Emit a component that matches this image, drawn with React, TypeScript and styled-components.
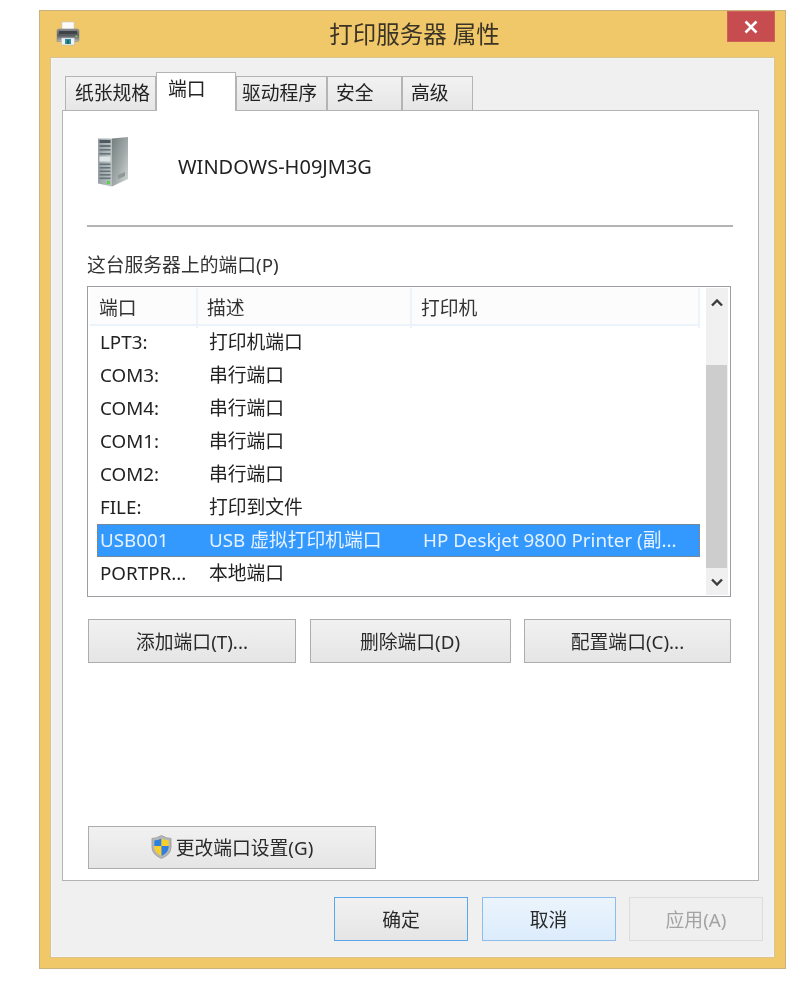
import React from 'react';
import styled, { createGlobalStyle } from 'styled-components';

const GlobalStyle = createGlobalStyle`
  html, body {
    margin: 0;
    padding: 0;
    background: #ffffff;
  }
  body {
    font-family: "Noto Sans", "Noto Sans CJK SC", sans-serif;
    font-size: 18.8px;
    color: #222222;
  }
`;

const Page = styled.div`
  width: 810px;
  height: 998px;
  box-sizing: border-box;
  padding: 10px 0 0 39px;
  overflow: hidden;
`;

const Window = styled.div`
  width: 747px;
  height: 959px;
  box-sizing: border-box;
  display: flex;
  flex-direction: column;
  background: #f0c869;
  border: 1px solid #c9b27c;
  filter: blur(0.5px);
`;

const TitleBar = styled.div`
  height: 46px;
  flex: none;
  display: grid;
  grid-template-columns: 1fr auto 1fr;
  align-items: center;
  padding: 0 10px 0 14px;
`;

const Title = styled.div`
  font-size: 23.5px;
  color: #3a3326;
  margin-top: -3px;
`;

const CloseButton = styled.div`
  justify-self: end;
  align-self: start;
  width: 48px;
  height: 31px;
  display: flex;
  align-items: center;
  justify-content: center;
  background: #c74c50;
  box-shadow: inset 0 0 0 1px #d0605a;
`;

const Client = styled.div`
  flex: 1;
  margin: 0 10px 10px;
  display: flex;
  flex-direction: column;
  background: #f0f0f0;
  border: 1px solid #d9c48e;
  box-shadow: inset 0 0 0 1px #f4f4f4;
`;

const TabRow = styled.div`
  height: 39px;
  margin: 14px 0 -1px 14px;
  display: flex;
  align-items: flex-end;
  position: relative;
  z-index: 1;
`;

const Tab = styled.div<{ $active?: boolean; $w: number; $pad: number }>`
  width: ${(p) => p.$w}px;
  height: ${(p) => (p.$active ? 39 : 35)}px;
  box-sizing: border-box;
  padding-left: ${(p) => p.$pad}px;
  line-height: 33px;
  border: 1.5px solid #b4b4b4;
  border-bottom: ${(p) => (p.$active ? 'none' : '1.5px solid #b4b4b4')};
  border-left-width: ${(p) => (p.$active ? 1.5 : 1)}px;
  background: ${(p) => (p.$active ? '#ffffff' : 'linear-gradient(#f2f2f2, #e6e6e6)')};
  color: #222222;
  white-space: nowrap;
`;

const Panel = styled.div`
  flex: none;
  height: 771px;
  margin: 0 15px 0 11px;
  box-sizing: border-box;
  padding: 0 25px 11px 24px;
  display: flex;
  flex-direction: column;
  background: #ffffff;
  border: 1.5px solid #b4b4b4;
`;

const ServerRow = styled.div`
  height: 116px;
  flex: none;
  box-sizing: border-box;
  padding: 26px 0 0 10px;
  display: flex;
  align-items: flex-start;
  gap: 49px;
  border-bottom: 2px solid #b4b4b4;
`;

const ServerName = styled.div`
  margin-top: 17px;
  font-size: 20px;
  line-height: 26px;
  color: #222222;
`;

const SectionLabel = styled.div`
  margin-top: 25px;
  line-height: 26px;
  height: 34px;
  color: #333333;
`;

const ListBox = styled.div`
  width: 644px;
  height: 311px;
  flex: none;
  box-sizing: border-box;
  display: grid;
  grid-template-columns: 1fr 24px;
  padding: 1px 2px 1px 2px;
  border: 1.5px solid #9a9ea3;
`;

const ListBody = styled.div`
  min-width: 0;
  display: flex;
  flex-direction: column;
`;

const HeaderRow = styled.div`
  width: 610px;
  height: 38px;
  flex: none;
  box-sizing: border-box;
  display: grid;
  grid-template-columns: 108px 214px 1fr;
  align-items: stretch;
  background: #fcfcfc;
  border-bottom: 2px solid #ecf3fb;
`;

const HeaderCell = styled.div`
  padding-left: 9px;
  line-height: 40px;
  color: #333333;
  border-right: 2px solid #ecf3fb;
`;

const Rows = styled.div`
  margin-left: 7px;
  width: 603px;
`;

const Row = styled.div<{ $selected?: boolean }>`
  height: 33px;
  box-sizing: border-box;
  display: grid;
  grid-template-columns: 109px 214px 1fr;
  align-items: center;
  padding-left: 3px;
  line-height: 31px;
  white-space: nowrap;
  color: ${(p) => (p.$selected ? '#e6f2ff' : '#222222')};
  background: ${(p) => (p.$selected ? '#3399ff' : 'transparent')};
  outline: ${(p) => (p.$selected ? '1px dotted #b07a40' : 'none')};
  outline-offset: -1px;
`;

const ScrollBar = styled.div`
  display: flex;
  flex-direction: column;
  align-items: stretch;
  margin-left: 2px;
  background: #f0f0f0;
`;

const ScrollArrow = styled.div<{ $h: number }>`
  height: ${(p) => p.$h}px;
  flex: none;
  display: flex;
  align-items: center;
  justify-content: center;
`;

const ScrollThumb = styled.div`
  height: 203px;
  flex: none;
  margin: 47px 1px 0 0;
  background: #cdcdcd;
`;

const ActionRow = styled.div`
  margin: 22px 0 0 1px;
  display: grid;
  grid-template-columns: 208px 201px 207px;
  column-gap: 13.5px;
  flex: none;
`;

const Button = styled.div<{ $variant?: 'default' | 'hover' | 'disabled' }>`
  height: 43.5px;
  box-sizing: border-box;
  display: flex;
  align-items: center;
  justify-content: center;
  gap: 4px;
  white-space: nowrap;
  color: ${(p) => (p.$variant === 'disabled' ? '#a3a3a3' : '#2a2a2a')};
  border: 1.5px solid
    ${(p) =>
      p.$variant === 'default'
        ? '#5aa7f0'
        : p.$variant === 'hover'
          ? '#8dbdea'
          : p.$variant === 'disabled'
            ? '#dcdcdc'
            : '#adadad'};
  background: ${(p) =>
    p.$variant === 'hover'
      ? 'linear-gradient(#ebf4fc, #dcecfc)'
      : p.$variant === 'disabled'
        ? '#efefef'
        : 'linear-gradient(#f1f1f1, #e5e5e5)'};
`;

const SettingsButton = styled(Button)`
  width: 288px;
  margin: auto 0 0 1px;
`;

const Footer = styled.div`
  margin-top: 16px;
  padding-right: 11px;
  display: grid;
  grid-template-columns: repeat(3, 134px);
  column-gap: 13.5px;
  justify-content: end;
`;

const PrinterIcon = () => (
  <svg width="28" height="28" viewBox="0 0 28 28">
    <defs>
      <linearGradient id="pr-body" x1="0" y1="0" x2="0" y2="1">
        <stop offset="0" stopColor="#8b8f92" />
        <stop offset="0.5" stopColor="#55595d" />
        <stop offset="1" stopColor="#b9bcbe" />
      </linearGradient>
    </defs>
    <path d="M8 2h12v9H8z" fill="#fbfbfb" stroke="#c9c9c9" strokeWidth="0.6" />
    <path d="M3 10.500Q3 9 5 9h18q2 0 2 1.500V20q0 1.500-2 1.500H3z" fill="url(#pr-body)" stroke="#8b8b8b" strokeWidth="0.6" />
    <rect x="5" y="11" width="18" height="3" fill="#3f4346" />
    <rect x="21.500" y="15.500" width="2" height="1.500" fill="#7fd36a" />
    <path d="M7.500 18h13v7h-13z" fill="#eef3f4" stroke="#b5b5b5" strokeWidth="0.6" />
    <path d="M11 19h6v5h-6z" fill="#2f8fa8" />
    <path d="M13 20h2v4h-2z" fill="#1c6b56" />
  </svg>
);

const ServerIcon = () => (
  <svg width="32" height="50" viewBox="0 0 32 50">
    <defs>
      <linearGradient id="sv-side" x1="0" y1="0" x2="1" y2="1">
        <stop offset="0" stopColor="#737e7e" />
        <stop offset="0.55" stopColor="#a3abaa" />
        <stop offset="1" stopColor="#d6dad8" />
      </linearGradient>
      <linearGradient id="sv-front" x1="0" y1="0" x2="1" y2="0">
        <stop offset="0" stopColor="#98a2a6" />
        <stop offset="1" stopColor="#bcc3c5" />
      </linearGradient>
    </defs>
    <path d="M15 1.500L31 0v42L15 49.500z" fill="url(#sv-side)" />
    <path d="M1 1.500h14v48L1 46.500z" fill="url(#sv-front)" />
    <rect x="2.500" y="3" width="11" height="3" fill="#4e5a5e" />
    <rect x="2.500" y="8" width="11" height="2" fill="#66747a" />
    <rect x="2.500" y="12" width="11" height="1.600" fill="#66747a" />
    <rect x="2.500" y="16" width="11" height="1.600" fill="#66747a" />
    <rect x="2.500" y="19.500" width="11" height="5" fill="#dfe5e6" />
    <rect x="2.500" y="26.500" width="11" height="1.600" fill="#66747a" />
    <rect x="2.500" y="30" width="11" height="1.600" fill="#66747a" />
    <rect x="2.500" y="33.500" width="11" height="1.600" fill="#66747a" />
    <rect x="2.500" y="37" width="11" height="1.600" fill="#66747a" />
    <rect x="2.500" y="40.500" width="11" height="1.600" fill="#66747a" />
    <rect x="10" y="44" width="3" height="3" fill="#5fd34e" />
    <path d="M21 38l7-3v4l-7 3z" fill="#8f9898" />
  </svg>
);

const ShieldIcon = () => (
  <svg width="21" height="26" viewBox="0 0 22 26">
    <path d="M11 1q5 3 10 3v9q0 8-10 12Q1 21 1 13V4q5 0 10-3z" fill="#b6b6b6" stroke="#8f8f8f" strokeWidth="0.7" />
    <path d="M11 4q-3 1.700-7.500 2.200V12H11z" fill="#2f7fdc" />
    <path d="M11 4q3 1.700 7.500 2.200V12H11z" fill="#f7cf2b" />
    <path d="M3.500 12H11v10.500q-7-3-7.500-9.500z" fill="#f7cf2b" />
    <path d="M18.500 12H11v10.500q7-3 7.500-9.500z" fill="#2f7fdc" />
  </svg>
);

const CloseIcon = () => (
  <svg width="14" height="14" viewBox="0 0 14 14">
    <path d="M1.500 1.500l11 11M12.500 1.500l-11 11" stroke="#ffffff" strokeWidth="2.600" />
  </svg>
);

const Chevron = ({ down }: { down?: boolean }) => (
  <svg width="12" height="8" viewBox="0 0 12 8">
    <path d={down ? 'M1 1.500l5 5 5-5' : 'M1 6.500l5-5 5 5'} fill="none" stroke="#3c3c3c" strokeWidth="2.400" />
  </svg>
);

const tabs = [
  { label: '纸张规格', w: 91, pad: 9 },
  { label: '端口', w: 80, pad: 11, active: true },
  { label: '驱动程序', w: 91, pad: 5 },
  { label: '安全', w: 75, pad: 8 },
  { label: '高级', w: 71, pad: 8 },
];

const ports = [
  { port: 'LPT3:', desc: '打印机端口' },
  { port: 'COM3:', desc: '串行端口' },
  { port: 'COM4:', desc: '串行端口' },
  { port: 'COM1:', desc: '串行端口' },
  { port: 'COM2:', desc: '串行端口' },
  { port: 'FILE:', desc: '打印到文件' },
  { port: 'USB001', desc: 'USB 虚拟打印机端口', printer: 'HP Deskjet 9800 Printer (副...', selected: true },
  { port: 'PORTPR...', desc: '本地端口' },
];

const App: React.FC = () => (
  <Page>
    <GlobalStyle />
    <Window>
      <TitleBar>
        <PrinterIcon />
        <Title>打印服务器 属性</Title>
        <CloseButton>
          <CloseIcon />
        </CloseButton>
      </TitleBar>
      <Client>
        <TabRow>
          {tabs.map((tab) => (
            <Tab key={tab.label} $w={tab.w} $pad={tab.pad} $active={tab.active}>
              {tab.label}
            </Tab>
          ))}
        </TabRow>
        <Panel>
          <ServerRow>
            <ServerIcon />
            <ServerName>WINDOWS-H09JM3G</ServerName>
          </ServerRow>
          <SectionLabel>这台服务器上的端口(P)</SectionLabel>
          <ListBox>
            <ListBody>
              <HeaderRow>
                <HeaderCell>端口</HeaderCell>
                <HeaderCell>描述</HeaderCell>
                <HeaderCell>打印机</HeaderCell>
              </HeaderRow>
              <Rows>
                {ports.map((item) => (
                  <Row key={item.port} $selected={item.selected}>
                    <span>{item.port}</span>
                    <span>{item.desc}</span>
                    <span>{item.printer}</span>
                  </Row>
                ))}
              </Rows>
            </ListBody>
            <ScrollBar>
              <ScrollArrow $h={30}>
                <Chevron />
              </ScrollArrow>
              <ScrollThumb />
              <ScrollArrow $h={27}>
                <Chevron down />
              </ScrollArrow>
            </ScrollBar>
          </ListBox>
          <ActionRow>
            <Button>添加端口(T)...</Button>
            <Button>删除端口(D)</Button>
            <Button>配置端口(C)...</Button>
          </ActionRow>
          <SettingsButton>
            <ShieldIcon />
            更改端口设置(G)
          </SettingsButton>
        </Panel>
        <Footer>
          <Button $variant="default">确定</Button>
          <Button $variant="hover">取消</Button>
          <Button $variant="disabled">应用(A)</Button>
        </Footer>
      </Client>
    </Window>
  </Page>
);

export default App;
